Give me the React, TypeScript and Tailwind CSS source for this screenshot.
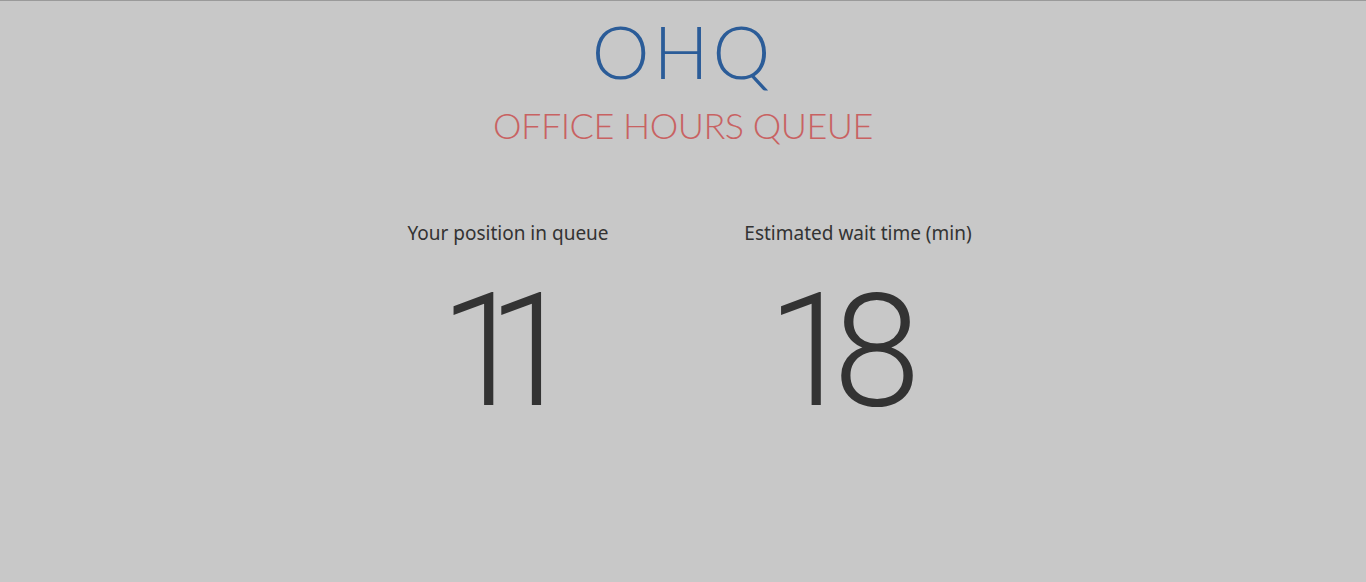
export default function App() {
  return (
    <div className="min-h-[582px] w-full border-t border-[#9a9a9a] bg-[#c8c8c8] text-[#333333]">
      <div className="flex flex-col items-center pt-[11px]">
        <h1 className="font-['Lato','Open_Sans',sans-serif] text-[73px] font-light leading-[78px] tracking-[4px] text-[#2b5c98]">
          OHQ
        </h1>
        <h2 className="mt-[13px] font-['Lato','Open_Sans',sans-serif] text-[36px] font-light leading-[44px] tracking-[-0.5px] text-[#c86262]">
          OFFICE HOURS QUEUE
        </h2>
      </div>
      <div className="mx-auto mt-[72px] grid w-[700px] grid-cols-2">
        <div className="flex flex-col items-center">
          <div className="font-['Noto_Sans','Open_Sans',sans-serif] text-[19px] leading-[28px]">Your position in queue</div>
          <div className="mt-[25px] ml-[-41px] font-['Roboto','Open_Sans',sans-serif] text-[158px] font-light leading-[158px] tracking-[-40px] [font-kerning:none]">
            11
          </div>
        </div>
        <div className="flex flex-col items-center">
          <div className="font-['Noto_Sans','Open_Sans',sans-serif] text-[19px] leading-[28px]">Estimated wait time (min)</div>
          <div className="mt-[25px] ml-[-50px] font-['Roboto','Open_Sans',sans-serif] text-[158px] font-light leading-[158px] tracking-[-22px] [font-kerning:none]">
            18
          </div>
        </div>
      </div>
    </div>
  );
}
